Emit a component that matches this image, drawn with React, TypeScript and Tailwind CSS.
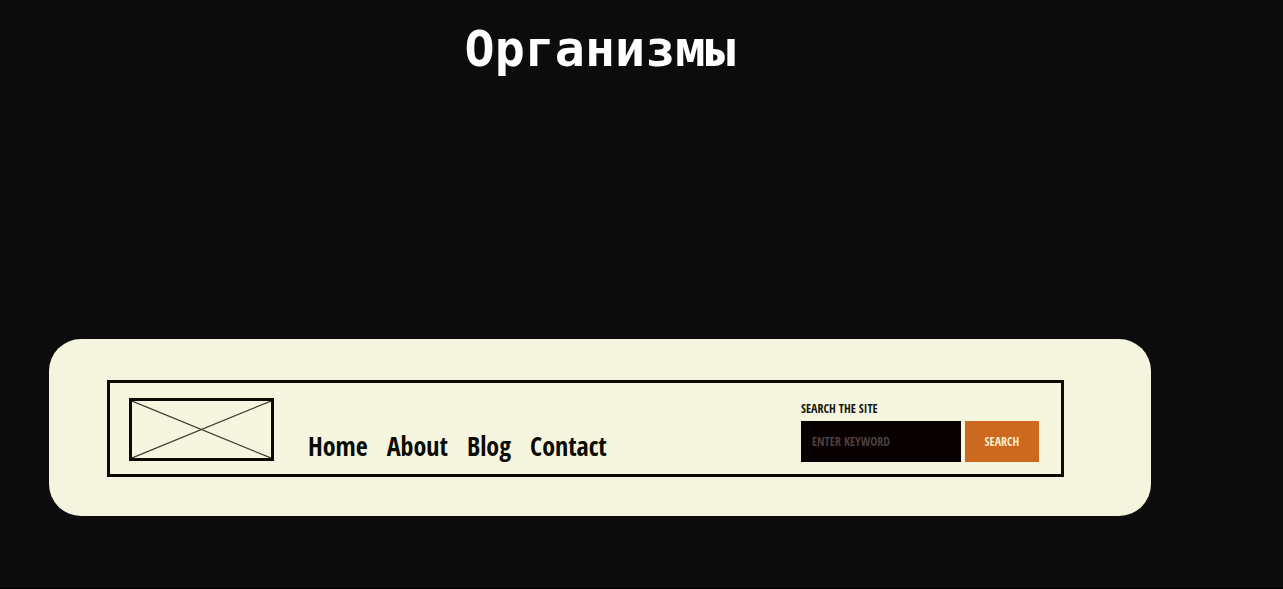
const links = ["Home", "About", "Blog", "Contact"];

function LogoPlaceholder() {
  return (
    <a href="#" aria-label="Logo" className="block h-[63px] w-[145px] shrink-0 self-center border-3 border-[#080a03]">
      <svg viewBox="0 0 139 57" preserveAspectRatio="none" className="block h-full w-full" stroke="#3a3b2e" strokeWidth="1.2">
        <path d="M0 0L139 57M139 0L0 57" />
      </svg>
    </a>
  );
}

function SearchForm() {
  return (
    <form className="ml-auto flex shrink-0 flex-col" onSubmit={(e) => e.preventDefault()}>
      <label htmlFor="keyword" className="text-[12px] leading-6 text-[#14150c]">
        SEARCH THE SITE
      </label>
      <div className="flex gap-1">
        <input
          id="keyword"
          type="text"
          placeholder="ENTER KEYWORD"
          className="h-[41px] w-[160px] bg-[#080000] px-[11px] text-[12px] text-[#f6f6e0] outline-none placeholder:text-[#4c3f3d]"
        />
        <button type="submit" className="h-[41px] w-[74px] bg-[#cc691f] text-[12px] text-[#fdecc8]">
          SEARCH
        </button>
      </div>
    </form>
  );
}

export default function App() {
  return (
    <div className="min-h-screen border-b border-black bg-[#0c0c0c] pr-[132px] pl-[49px]">
      <h1 className="pt-4 text-center font-['DejaVu_Sans_Mono',monospace] text-[50px] leading-[66px] font-bold text-white">
        Организмы
      </h1>
      <section className="mt-[257px] rounded-[32px] bg-[#f4f4df] pt-[41px] pr-[87px] pb-[39px] pl-[58px] font-['Open_Sans_Condensed','Roboto_Condensed','Liberation_Sans_Narrow',sans-serif] font-bold">
        <header className="flex items-end border-3 border-[#080a03] bg-[#f6f6e0] pt-[14px] pr-[22px] pb-3 pl-[19px]">
          <LogoPlaceholder />
          <nav className="ml-[34px] flex gap-[19px]">
            {links.map((link) => (
              <a key={link} href="#" className="text-[26px] leading-8 text-[#0b0c04]">
                {link}
              </a>
            ))}
          </nav>
          <SearchForm />
        </header>
      </section>
    </div>
  );
}
